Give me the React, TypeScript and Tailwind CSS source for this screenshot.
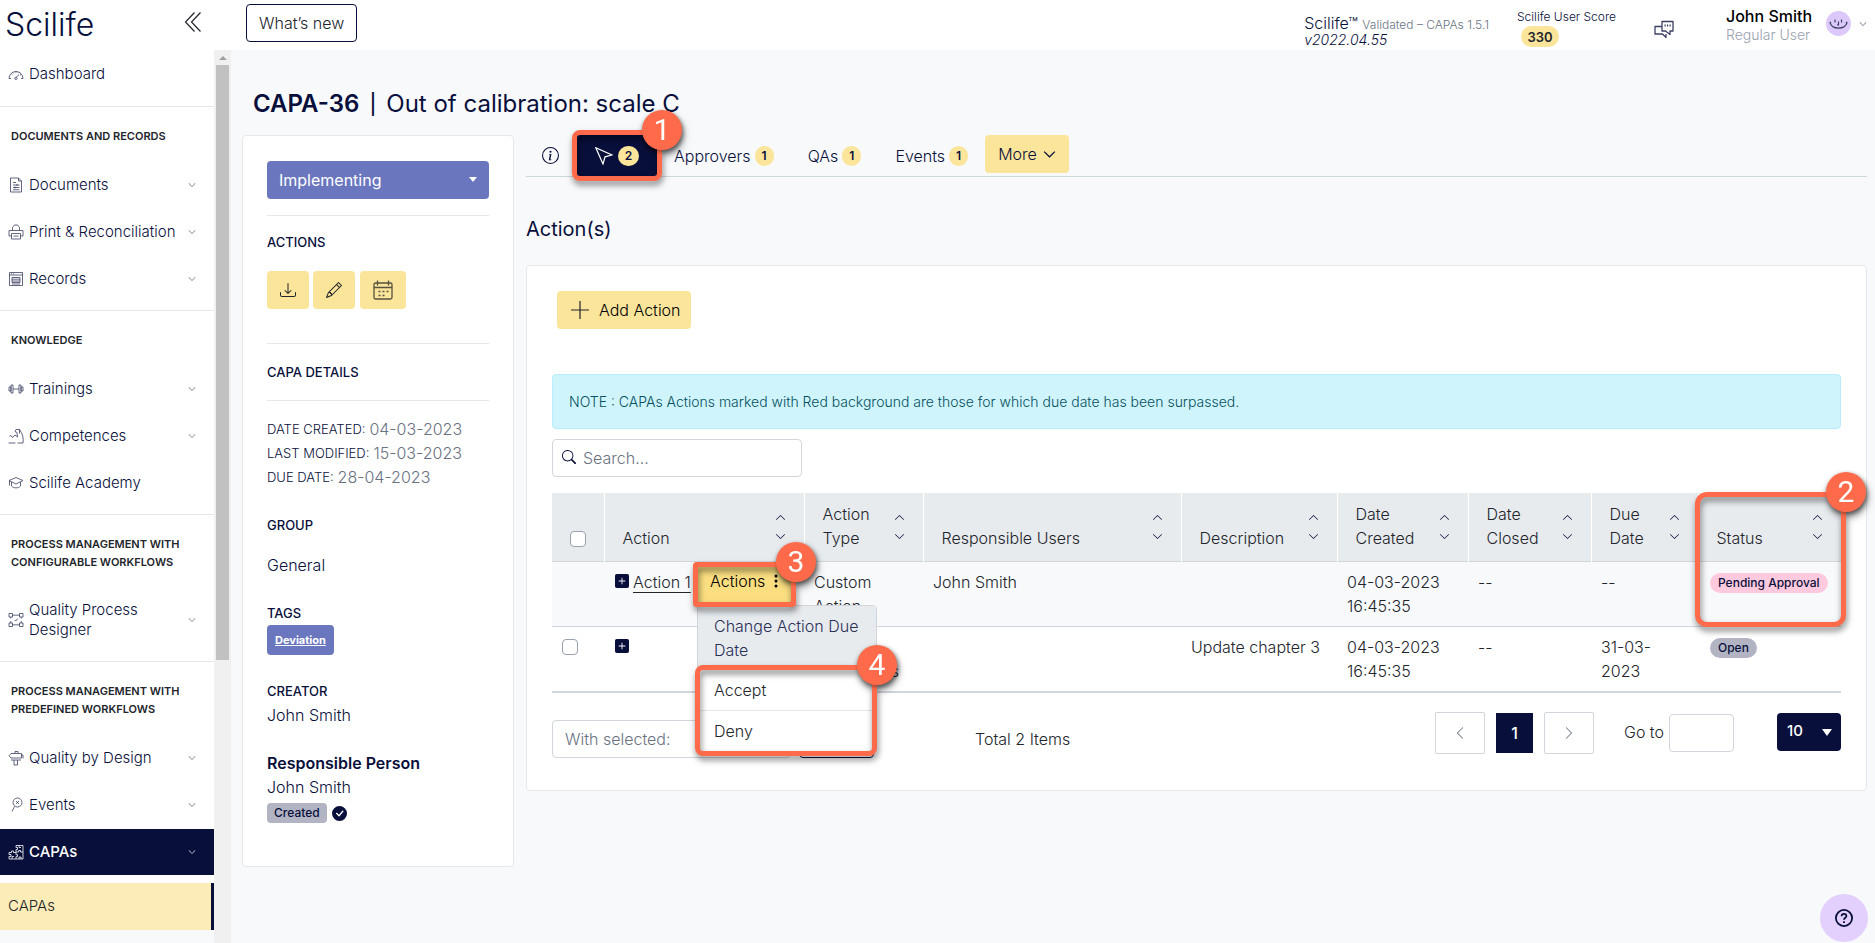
import React from 'react';
import {
  BsCheckCircleFill,
  BsChevronDown,
  BsChevronLeft,
  BsChevronRight,
  BsChevronUp,
  BsDownload,
  BsInfoCircle,
  BsPencil,
  BsPlusSquareFill,
  BsSearch,
  BsThreeDotsVertical
} from 'react-icons/bs';

// Thin outline icons of the navigation, all on a 16px grid
const iconPaths: Record<string, React.ReactNode> = {
  dashboard: (
    <>
      <path d="M1 12.5H3M13 12.5h2M1 12.5a7 7 0 0 1 14 0M8 5.5v1.2M3.6 8.2l.8.7M5 6.8l.5.6M11 6.3l-.4.7M13 8.6l-1 .6" />
      <path d="M7.4 12.2 11 8.6M8 11.2a1.2 1.2 0 1 1-.1 0" />
    </>
  ),
  document: (
    <>
      <path d="M2.5 1h8l3 3v11h-11zM10.5 1v3h3" />
      <path d="M5 5.5h3M5 8h6.5M5 10.5h6.5M5 12.8h6.5M9 7v2M7 9.500v2" />
    </>
  ),
  print: (
    <>
      <path d="M4.500 6V3.500L6.500 1h3l2 2.500V6M1 6.500h14v5.500h-2.500M3.500 12H1V6.500M3.500 9.500h9V15h-9zM5.500 12h5" />
    </>
  ),
  record: (
    <>
      <path d="M1.500 1.500h13v13h-13zM1.500 4h13M3 2.800h1M5 2.800h1" />
      <path d="M4 6.500h8v5H4zM4 8.200h8M4 10h8M4 13h8" />
    </>
  ),
  training: <path d="M3 4h2v8H3zM11 4h2v8h-2zM1 6h2v4H1zM13 6h2v4h-2zM5 8h6" />,
  competence: (
    <path d="M.5 15h7M9.500 15H15c.8-5-.5-9.500-3.500-13.500H8L7 3.500l2 1M9 4.500 9.500 9 7 7 4.500 9.500 3 7.500l-1.500.8M11.500 1.500v4" />
  ),
  academy: <path d="M1 5.500 8 2.500l7 3-7 3.500zM3.500 7v4c2 2.500 7 2.500 9 0V7M1.500 6v4.500" />,
  process: (
    <path d="M1 1.500h3.500V5H1zM11.500 1.500H15V5h-3.500zM1 11h3.500v3.500H1zM11.500 11H15v3.500h-3.500zM4.500 3.200h7M4.500 12.800h7M2.800 5v1.500M2.800 9v2M13.200 5v1.500M13.200 9v2M6.500 7.800l1.200 1.300 2-2.500" />
  ),
  design: <path d="M3 3.500h10.500V8H3L1 5.800zM13.500 5H15v3.500M7 3.500V1.500h3v2M6 10v5h3.500v-5M3 10h10" />,
  event: (
    <>
      <circle cx="9.500" cy="5.500" r="4.500" />
      <path d="m8 4 3 3M11 4 8 7M6.500 9.500 4 14.500" />
    </>
  ),
  capa: (
    <path d="M1 8.500h2.500V7h2v1.500H8V5.500h1.500v-2H8V1.500h7V15H1v-2.500h2v-2H1zM8 8.500v2.200M8 12.700V15M8 10.700h1.500v2H8M15 8h-2.500V6.500h-1.800V8H8M4 15v-2.500h2M11 15v-2h2v2M11 1.500v2h2" />
  )
};

const NavIcon: React.FC<{ name: string; color: string }> = ({ name, color }) => (
  <svg viewBox="0 0 16 16" className="size-4 shrink-0" fill="none" stroke={color} strokeWidth="0.8" aria-hidden="true">
    {iconPaths[name]}
  </svg>
);

const navGroups = [
  { title: '', items: [{ label: 'Dashboard', icon: 'dashboard', open: false }] },
  {
    title: 'DOCUMENTS AND RECORDS',
    items: [
      { label: 'Documents', icon: 'document', open: true },
      { label: 'Print & Reconciliation', icon: 'print', open: true },
      { label: 'Records', icon: 'record', open: true }
    ]
  },
  {
    title: 'KNOWLEDGE',
    items: [
      { label: 'Trainings', icon: 'training', open: true },
      { label: 'Competences', icon: 'competence', open: true },
      { label: 'Scilife Academy', icon: 'academy', open: false }
    ]
  },
  {
    title: 'PROCESS MANAGEMENT WITH CONFIGURABLE WORKFLOWS',
    items: [{ label: 'Quality Process Designer', icon: 'process', open: true }]
  },
  {
    title: 'PROCESS MANAGEMENT WITH PREDEFINED WORKFLOWS',
    items: [
      { label: 'Quality by Design', icon: 'design', open: true },
      { label: 'Events', icon: 'event', open: true }
    ]
  }
];

const tabs = [
  { label: 'Approvers', count: 1 },
  { label: 'QAs', count: 1 },
  { label: 'Events', count: 1 }
];

const columns = [
  { label: 'Action', width: 'w-[200px]' },
  { label: 'Action Type', width: 'w-[119px]' },
  { label: 'Responsible Users', width: '' },
  { label: 'Description', width: 'w-[156px]' },
  { label: 'Date Created', width: 'w-[131px]' },
  { label: 'Date Closed', width: 'w-[123px]' },
  { label: 'Due Date', width: 'w-[107px]' },
  { label: 'Status', width: 'w-[143px]' }
];

// Orange frame with a numbered step in its top right corner
const Callout: React.FC<{ step: number; className: string }> = ({ step, className }) => (
  <div
    className={`pointer-events-none absolute z-20 border-5 border-[#ff6b4a] drop-shadow-[1px_4px_3px_rgba(0,0,0,0.5)] ${className}`}
  >
    <span className="absolute -top-[25px] -right-[25px] flex size-10 items-center justify-center rounded-full bg-[#ff6b4a] font-['Roboto',sans-serif] text-[30px] leading-none font-normal text-white drop-shadow-[1px_2px_2px_rgba(0,0,0,0.4)]">
      {step}
    </span>
  </div>
);

const Count: React.FC<{ value: number }> = ({ value }) => (
  <span className="flex h-5 items-center rounded-full bg-[#fbe59b] px-[7px] text-xs font-semibold text-[#080f3b]">
    {value}
  </span>
);

const Sidebar: React.FC = () => (
  <aside className="flex w-[231px] shrink-0">
    <nav className="w-[214px] overflow-hidden">
      <div className="bg-white pb-2">
        {navGroups.map((group, index) => (
          <div key={index} className={index > 0 ? 'border-t border-gray-200 pt-5' : ''}>
            {group.title && (
              <h2 className="mb-4 pr-5 pl-[11px] text-[11px] leading-[18px] font-semibold text-[#22252b]">{group.title}</h2>
            )}
            <ul className={index === 0 ? 'mb-[9px]' : index < navGroups.length - 1 ? 'mb-2' : 'mb-px'}>
              {group.items.map((item) => (
                <li key={item.label}>
                  <a href="#" className="flex min-h-[47px] items-center gap-[5px] py-[13px] pr-[18px] pl-2 text-[15px] leading-5 text-[#080f3b]">
                    <NavIcon name={item.icon} color="#3b4063" />
                    <span className={item.icon === 'process' ? 'w-32' : 'whitespace-nowrap'}>{item.label}</span>
                    {item.open && <BsChevronDown className="ml-auto size-2 shrink-0 text-[#4a4f6e]" />}
                  </a>
                </li>
              ))}
            </ul>
          </div>
        ))}
        <a href="#" className="flex h-[46px] items-center gap-[5px] bg-[#080f3b] pr-[18px] pl-2 text-[15px] font-medium text-white">
          <NavIcon name="capa" color="#ffffff" />
          CAPAs
          <BsChevronDown className="ml-auto size-2" />
        </a>
      </div>
      <a href="#" className="flex h-[47px] items-center border-r-3 border-[#080f3b] bg-[#fcecb8] pl-2 text-[15px] text-[#22252b]">
        CAPAs
      </a>
    </nav>
    <div className="flex w-[17px] flex-col items-center bg-[#f0f0f0]">
      <div className="flex h-[15px] items-center">
        <svg viewBox="0 0 8 4" className="h-1 w-2" aria-hidden="true">
          <path d="M4 0 8 4H0z" fill="#a0a0a0" />
        </svg>
      </div>
      <div className="h-2/3 w-[13px] bg-[#c1c1c1]" />
    </div>
  </aside>
);

const Header: React.FC = () => (
  <header className="flex h-[50px] shrink-0 items-start bg-white">
    <div className="flex w-[246px] items-start justify-between pr-11 pl-[5px]">
      <span className="text-[32px] leading-[50px] text-[#080f3b]">Scilife</span>
      <button aria-label="Collapse menu" className="mt-3">
        <svg viewBox="0 0 18 20" className="h-5 w-[18px]" fill="none" stroke="#22252b" strokeWidth="1.2">
          <path d="M10.500.500 1.500 10l9 9.500M16.500.500 7.500 10l9 9.500" />
        </svg>
      </button>
    </div>
    <button className="mt-1 h-[38px] rounded border border-[#080f3b] px-3 text-base text-[#22252b]">What’s new</button>
    <div className="ml-auto flex items-start">
      <div className="mt-3 mr-7 text-[#080f3b]">
        <div className="text-base leading-[22px]">
          Scilife™ <span className="text-xs text-gray-500">Validated – CAPAs 1.5.1</span>
        </div>
        <div className="text-sm leading-3 italic">v2022.04.55</div>
      </div>
      <div className="mt-2 mr-[38px] text-xs leading-[18px] text-[#080f3b]">
        Scilife User Score
        <div className="ml-1 flex h-[21px] w-[38px] items-center justify-center rounded-full bg-[#fbe59b] text-[13px] font-semibold text-[#22252b]">
          330
        </div>
      </div>
      <button aria-label="Messages" className="mt-5 mr-[52px]">
        <svg viewBox="0 0 20 19" className="h-[19px] w-5" fill="none" stroke="#3b4063" strokeWidth="1.300" strokeLinejoin="round">
          <path d="M11.500 11H8V1.500h11V11h-3v3.500zM7.500 6.500H1V14h3M4 14h4.500l3.500 3.500v-3.500" />
          <path d="M10.500 5.500h1.200M13 5.500h1.200M15.500 5.500h1.200" strokeWidth="1.800" />
        </svg>
      </button>
      <div className="mt-1.5 w-[100px]">
        <div className="text-base leading-5 font-medium text-black">John Smith</div>
        <div className="text-sm leading-[18px] text-gray-400">Regular User</div>
      </div>
      <button aria-label="Account menu" className="mt-[11px] mr-2 flex items-center gap-2">
        <svg viewBox="0 0 25 25" className="size-[25px]" fill="none" stroke="#3b4063">
          <circle cx="12.500" cy="12.500" r="12.500" fill="#dcc8fb" stroke="none" />
          <path d="M4 11.500c2 7.500 15 7.500 17 0M3.500 12l1.500-1M20 11l1.500 1M9 8.500v3M12.500 10.500v3.500h-1.500M15.500 8.500v3" strokeWidth="1.200" />
        </svg>
        <BsChevronDown className="size-2 text-[#3b4063]" />
      </button>
    </div>
  </header>
);

const DetailsCard: React.FC = () => (
  <section className="flex h-[732px] w-[272px] shrink-0 flex-col rounded border border-gray-200 bg-white px-6 pt-[25px] text-base leading-6 text-[#080f3b]">
    <div className="relative">
      <select aria-label="Workflow state" className="h-[38px] w-full appearance-none rounded bg-[#6a76be] px-3 font-normal text-white">
        <option>Implementing</option>
      </select>
      <svg viewBox="0 0 8 5" className="absolute top-4 right-3 h-[5px] w-2" aria-hidden="true">
        <path d="M0 0h8L4 5z" fill="#fff" />
      </svg>
    </div>
    <h2 className="mt-4 border-t border-gray-200 pt-[14px] text-[13px] leading-6 font-medium">ACTIONS</h2>
    <div className="mt-[17px] flex gap-1 text-[#22252b]">
      <button aria-label="Download" className="flex h-[38px] w-[42px] items-center justify-center rounded bg-[#fbe59b]">
        <BsDownload className="size-4" />
      </button>
      <button aria-label="Edit" className="flex h-[38px] w-[42px] items-center justify-center rounded bg-[#fbe59b]">
        <BsPencil className="size-4" />
      </button>
      <button aria-label="Schedule" className="ml-px flex h-[38px] w-[46px] items-center justify-center rounded bg-[#fbe59b]">
        <svg viewBox="0 0 20 20" className="size-5" fill="none" stroke="#55523f" strokeWidth="1.300">
          <rect x="1" y="3" width="18" height="16" rx="1.500" />
          <path d="M1 7.500h18M4.500.500v5M15.500.500v5" />
          <path d="M5.500 11.500h2M9.500 11.500h2M13.500 11.500h2M5.500 15.500h2M9.500 15.500h2" strokeWidth="1.600" />
        </svg>
      </button>
    </div>
    <h2 className="mt-[34px] border-t border-gray-200 pt-4 pb-4 text-[13px] leading-6 font-medium">CAPA DETAILS</h2>
    <dl className="border-t border-gray-200 pt-4">
      {[
        ['DATE CREATED:', '04-03-2023'],
        ['LAST MODIFIED:', '15-03-2023'],
        ['DUE DATE:', '28-04-2023']
      ].map(([term, value]) => (
        <div key={term} className="flex gap-1">
          <dt className="text-[13px]">{term}</dt>
          <dd className="text-gray-500">{value}</dd>
        </div>
      ))}
    </dl>
    <h2 className="mt-6 text-[13px] leading-6 font-medium">GROUP</h2>
    <p className="mt-4">General</p>
    <h2 className="mt-6 text-[13px] leading-6 font-medium">TAGS</h2>
    <a href="#" className="flex h-[30px] items-center self-start rounded bg-[#6a76be] px-2 text-[11px] font-bold text-white underline">
      Deviation
    </a>
    <h2 className="mt-6 text-[13px] leading-6 font-medium">CREATOR</h2>
    <p>John Smith</p>
    <h2 className="mt-6 font-semibold">Responsible Person</h2>
    <p>John Smith</p>
    <div className="mt-1 flex items-center gap-[5px]">
      <span className="flex h-5 items-center rounded bg-[#b2b4c4] px-[7px] text-xs font-medium">Created</span>
      <BsCheckCircleFill className="size-[15px]" />
    </div>
  </section>
);

const Tabs: React.FC = () => (
  <div className="flex h-[42px] items-start border-b border-gray-300 text-base text-[#080f3b]">
    <a href="#" aria-label="Information" className="mt-3 ml-4">
      <BsInfoCircle className="size-[17px]" />
    </a>
    <a href="#" aria-label="Actions, 2" className="relative ml-[18px] flex h-[41px] w-20 items-center justify-center gap-[5px] bg-[#080f3b]">
      <svg viewBox="0 0 18 18" className="size-[18px]" fill="none" stroke="#fff" strokeWidth="1.200">
        <path d="M.8.800 17 8 10 9.800 8 17z" />
      </svg>
      <Count value={2} />
      <Callout step={1} className="-inset-[5px] rounded-lg" />
    </a>
    <div className="mt-[9px] ml-[17px] flex gap-[34px]">
      {tabs.map((tab) => (
        <a key={tab.label} href="#" className="flex items-center gap-1">
          {tab.label}
          <Count value={tab.count} />
        </a>
      ))}
    </div>
    <button className="ml-[17px] flex h-[38px] items-center gap-1.5 rounded bg-[#fbe59b] px-[13px]">
      More
      <BsChevronDown className="size-[13px]" stroke="currentColor" strokeWidth="0.800" />
    </button>
  </div>
);

const Sorter: React.FC = () => (
  <span className="flex flex-col gap-2 text-[#080f3b]">
    <BsChevronUp className="size-[11px]" />
    <BsChevronDown className="size-[11px]" />
  </span>
);

const ActionMenu: React.FC = () => (
  <div className="relative -mt-2 -mb-7 ml-auto h-[45px] w-[103px]">
    <button className="flex h-full w-full items-start justify-between rounded bg-[#fade80] pt-[7px] pr-3 pl-[17px] text-black">
      Actions
      <BsThreeDotsVertical className="mt-1 size-4" />
    </button>
    <div className="absolute top-[43px] left-1 z-10 flex w-[180px] flex-col rounded border border-gray-300 bg-white">
      <a href="#" className="bg-[#e8ebee] py-2 pr-2 pl-4 text-[#2a2f57]">
        Change Action Due Date
      </a>
      <div className="relative flex flex-col">
        <a href="#" className="py-2 pl-4">
          Accept
        </a>
        <a href="#" className="border-t border-gray-200 py-2 pl-4">
          Deny
        </a>
        <Callout step={4} className="-top-[5px] -right-px -bottom-[5px] -left-[3px] rounded-lg" />
      </div>
    </div>
    <Callout step={3} className="inset-0 rounded" />
  </div>
);

const ActionsTable: React.FC = () => (
  <table className="mt-4 w-full table-fixed border-collapse text-base leading-6 text-[#22252b]">
    <thead>
      <tr className="h-[68px] border-b border-gray-300 bg-[#e8ebee]">
        <th className="w-[52px] border-r border-white pb-[14px] align-bottom">
          <input type="checkbox" aria-label="Select all" className="mx-auto block size-4 appearance-none rounded border border-gray-400 bg-white" />
        </th>
        {columns.map((column) => (
          <th
            key={column.label}
            className={`${column.width} relative border-r border-white px-[18px] pt-2 pb-[11px] text-left align-bottom font-light last:border-r-0`}
          >
            <div className="flex items-end justify-between">
              <span className={column.label.includes(' ') && column.width ? 'w-min' : 'whitespace-nowrap'}>{column.label}</span>
              <span className="pb-2">
                <Sorter />
              </span>
            </div>
            {column.label === 'Status' && <Callout step={2} className="-top-px -right-[5px] -left-[4px] h-[135px] rounded-xl" />}
          </th>
        ))}
      </tr>
    </thead>
    <tbody>
      <tr className="border-b border-gray-300 bg-[#f8f9fb] align-top">
        <td />
        <td className="py-2 pr-2 pl-[11px]">
          <div className="flex items-start">
            <BsPlusSquareFill className="mt-1 size-[14px] text-[#080f3b]" />
            <a href="#" className="ml-1 underline underline-offset-4">
              Action 1
            </a>
            <ActionMenu />
          </div>
        </td>
        <td className="px-[10px] py-2">Custom Action</td>
        <td className="px-[10px] py-2">John Smith</td>
        <td />
        <td className="px-[10px] py-2">04-03-2023 16:45:35</td>
        <td className="px-[10px] py-2">--</td>
        <td className="px-[10px] py-2">--</td>
        <td className="px-3 py-[11px]">
          <span className="flex h-5 w-max items-center rounded-full bg-[#ffc9de] px-2 text-xs font-medium text-[#080f3b]">Pending Approval</span>
        </td>
      </tr>
      <tr className="border-b-2 border-gray-300 align-top">
        <td className="px-[10px] py-3">
          <input type="checkbox" aria-label="Select action" className="block size-4 appearance-none rounded border border-gray-400 bg-white" />
        </td>
        <td className="px-[11px] py-3">
          <BsPlusSquareFill className="size-[14px] text-[#080f3b]" />
        </td>
        <td className="px-[10px] py-2">Other Documents</td>
        <td />
        <td className="px-[10px] py-2 whitespace-nowrap">Update chapter 3</td>
        <td className="px-[10px] py-2">04-03-2023 16:45:35</td>
        <td className="px-[10px] py-2">--</td>
        <td className="px-[10px] py-2">31-03-2023</td>
        <td className="px-3 py-[11px]">
          <span className="flex h-5 w-max items-center rounded-full bg-[#b2b4c4] px-2 text-xs font-medium text-[#080f3b]">Open</span>
        </td>
      </tr>
    </tbody>
  </table>
);

const TableFooter: React.FC = () => (
  <div className="mt-[19px] flex items-start text-base text-[#22252b]">
    <select aria-label="With selected" className="mt-2 h-[38px] w-[239px] appearance-none rounded border border-gray-300 bg-white px-3 text-gray-500">
      <option>With selected:</option>
    </select>
    <button aria-label="Apply" className="mt-2 ml-2 h-[38px] w-[75px] rounded border border-[#080f3b]" />
    <span className="mt-[15px] ml-[101px]">Total 2 Items</span>
    <div className="ml-auto flex items-start">
      <button aria-label="Previous page" className="flex h-[42px] w-[50px] items-center justify-center rounded-xs border border-gray-300">
        <BsChevronLeft className="size-[14px] text-gray-500" />
      </button>
      <button className="mx-[11px] mt-px h-10 w-[37px] bg-[#080f3b] font-medium text-white">1</button>
      <button aria-label="Next page" className="flex h-[42px] w-[50px] items-center justify-center rounded-xs border border-gray-300">
        <BsChevronRight className="size-[14px] text-gray-500" />
      </button>
      <label htmlFor="page" className="mt-2 ml-[30px]">
        Go to
      </label>
      <input id="page" className="mt-0.5 ml-[5px] h-[38px] w-[65px] rounded border border-gray-300 px-2" />
      <div className="relative mt-px ml-[43px]">
        <select aria-label="Items per page" className="h-[38px] w-16 appearance-none rounded bg-[#080f3b] px-[10px] text-[15px] font-medium text-white">
          <option>10</option>
        </select>
        <svg viewBox="0 0 10 7" className="absolute top-4 right-[9px] h-[7px] w-[10px]" aria-hidden="true">
          <path d="M0 0h10L5 7z" fill="#fff" />
        </svg>
      </div>
    </div>
  </div>
);

const App: React.FC = () => {
  return (
    <div className="flex h-screen flex-col overflow-hidden bg-[#f8f9fb] font-['Inter',sans-serif] font-light text-[#080f3b]">
      <Header />
      <div className="flex min-h-0 flex-1">
        <Sidebar />
        <main className="min-w-0 flex-1 pr-2 pl-[11px]">
          <h1 className="mt-9 ml-[11px] flex gap-[10px] text-2xl leading-9 font-normal">
            <span className="font-semibold">CAPA-36</span>
            <span className="text-xl leading-9 font-medium">|</span>
            <span>Out of calibration: scale C</span>
          </h1>
          <div className="mt-[13px] flex gap-3">
            <DetailsCard />
            <div className="min-w-0 flex-1">
              <Tabs />
              <h2 className="mt-[37px] text-xl leading-[30px] font-normal">Action(s)</h2>
              <section className="mt-[21px] rounded border border-gray-200 bg-white px-[25px] pt-[25px] pb-[32px]">
                <button className="ml-[5px] flex h-[38px] items-center gap-[10px] rounded bg-[#fbe59b] px-[10px] pl-[14px] text-base text-black">
                  <svg viewBox="0 0 18 18" className="size-[18px]" stroke="#22252b" strokeWidth="1.200">
                    <path d="M9 0v18M0 9h18" />
                  </svg>
                  Add Action
                </button>
                <p className="mt-[45px] rounded border border-[#b6effb] bg-[#cff4fc] px-4 py-4 text-sm leading-[21px] text-[#055160]">
                  NOTE : CAPAs Actions marked with Red background are those for which due date has been surpassed.
                </p>
                <div className="relative mt-[10px] w-[250px]">
                  <BsSearch className="absolute top-[11px] left-[10px] size-[14px]" />
                  <input
                    aria-label="Search"
                    placeholder="Search..."
                    className="h-[38px] w-full rounded border border-gray-300 pr-3 pl-[30px] text-base placeholder:text-gray-500"
                  />
                </div>
                <ActionsTable />
                <TableFooter />
              </section>
            </div>
          </div>
        </main>
      </div>
      <button aria-label="Help" className="fixed right-[7px] bottom-px flex size-12 items-center justify-center rounded-full bg-[#e3d0fd]">
        <svg viewBox="0 0 20 20" className="size-[18px]" fill="none" stroke="#080f3b" strokeWidth="2">
          <circle cx="10" cy="10" r="9" />
          <path d="M7.300 8c.2-3.500 5.500-3.200 5.400-.2C12.600 9.800 10 9.700 10 12M10 13.600v1.900" />
        </svg>
      </button>
    </div>
  );
};

export default App;
